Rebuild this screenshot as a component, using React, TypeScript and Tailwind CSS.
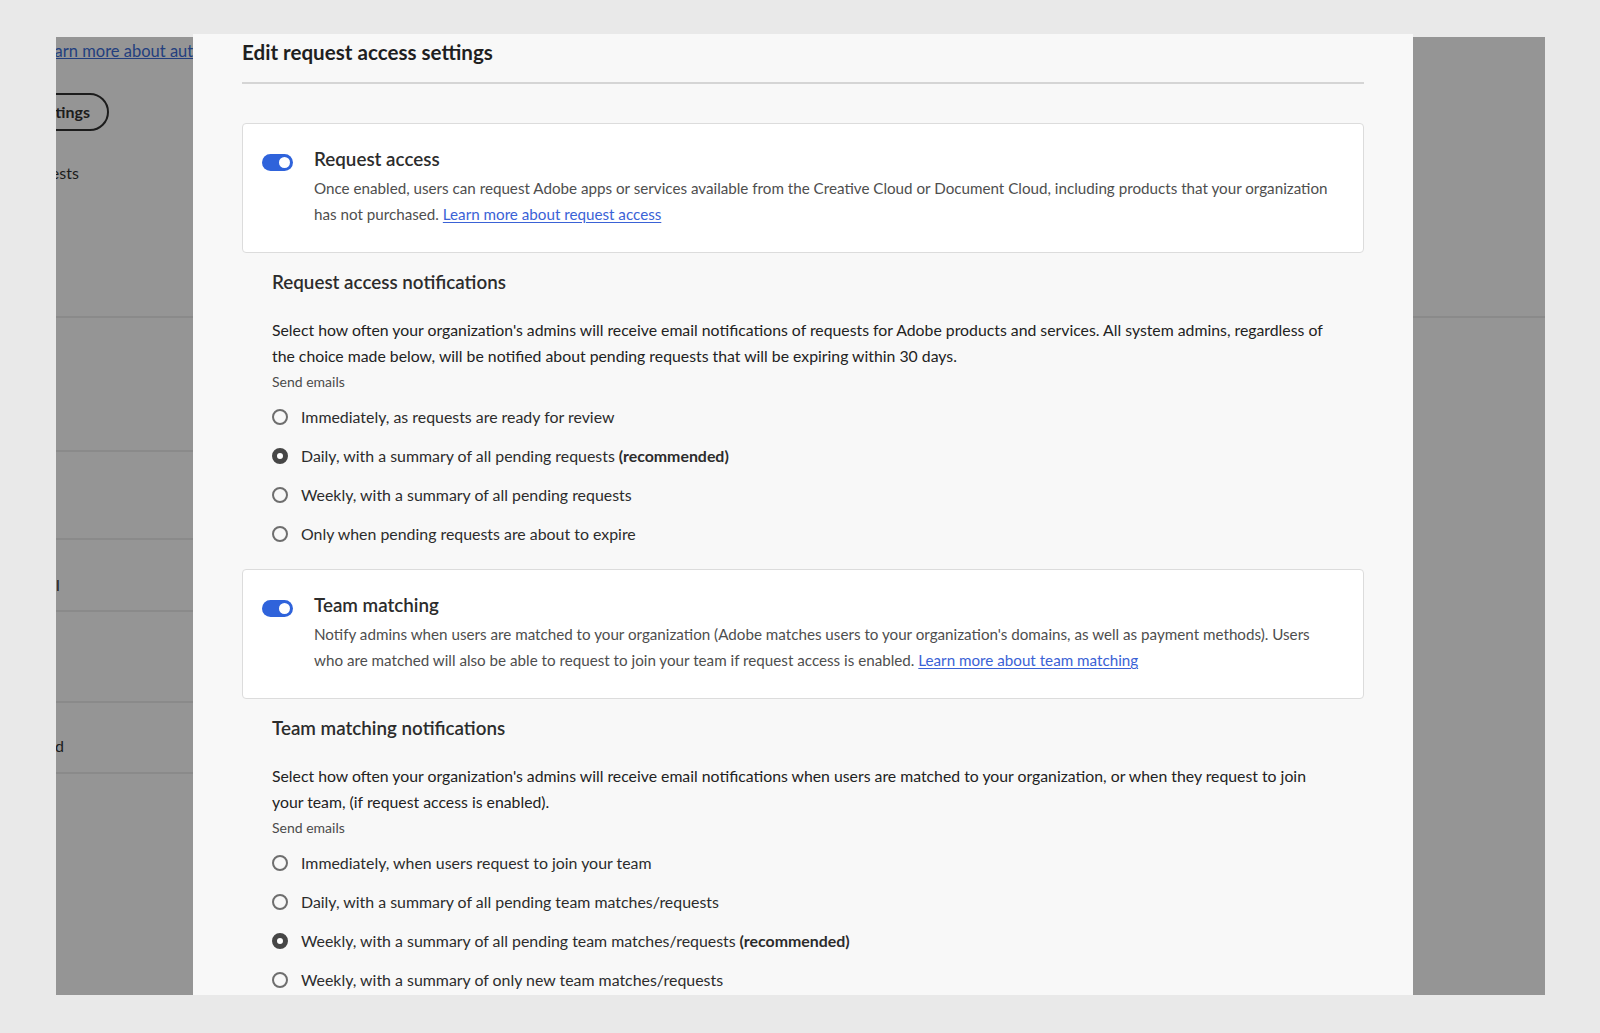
import React from 'react'

type Option = { label: string; extra?: string; checked?: boolean }

const requestOptions: Option[] = [
  { label: 'Immediately, as requests are ready for review' },
  { label: 'Daily, with a summary of all pending requests', extra: '(recommended)', checked: true },
  { label: 'Weekly, with a summary of all pending requests' },
  { label: 'Only when pending requests are about to expire' },
]

const teamOptions: Option[] = [
  { label: 'Immediately, when users request to join your team' },
  { label: 'Daily, with a summary of all pending team matches/requests' },
  { label: 'Weekly, with a summary of all pending team matches/requests', extra: '(recommended)', checked: true },
  { label: 'Weekly, with a summary of only new team matches/requests' },
]

function Toggle() {
  return (
    <div className="mt-[7px] w-[31px] h-[17px] shrink-0 rounded-full bg-[#2f63db] flex items-center justify-end pr-[3px]">
      <div className="w-[11px] h-[11px] rounded-full bg-white" />
    </div>
  )
}

function Radio({ checked }: { checked?: boolean }) {
  return checked ? (
    <span className="w-4 h-4 rounded-full border-[5px] border-[#464646] bg-white shrink-0" />
  ) : (
    <span className="w-4 h-4 rounded-full border-2 border-[#6e6e6e] bg-transparent shrink-0" />
  )
}

function SettingCard({ title, lines, link }: { title: string; lines: string[]; link: string }) {
  return (
    <div className="bg-white border border-[#dcdcdc] rounded-[4px] pt-[23px] pb-[25px] px-[19px] flex gap-[21px]">
      <Toggle />
      <div>
        <div className="text-[18.8px] leading-[24px] font-semibold text-[#2c2c2c]">{title}</div>
        <p className="mt-[4px] text-[15.2px] leading-[26px] text-[#4e4e4e] whitespace-nowrap">
          {lines[0]}
          <br />
          {lines[1]}{' '}
          <a className="text-[#3a62d6] underline underline-offset-2">{link}</a>
        </p>
      </div>
    </div>
  )
}

function NotificationSection({ heading, lines, options }: { heading: string; lines: string[]; options: Option[] }) {
  return (
    <section className="pl-[30px] mt-[17px]">
      <h3 className="text-[18.8px] leading-[24px] font-semibold text-[#2c2c2c]">{heading}</h3>
      <p className="mt-[23px] text-[15.8px] leading-[26px] text-[#222222] whitespace-nowrap">
        {lines[0]}
        <br />
        {lines[1]}
      </p>
      <div className="mt-[3px] text-[14px] leading-[20px] text-[#4b4b4b]">Send emails</div>
      <div className="mt-[13px] flex flex-col gap-[15px]">
        {options.map(o => (
          <label key={o.label} className="h-[24px] flex items-center gap-[13px] text-[15.9px] text-[#2c2c2c]">
            <Radio checked={o.checked} />
            <span>
              {o.label}
              {o.extra && <b className="font-bold"> {o.extra}</b>}
            </span>
          </label>
        ))}
      </div>
    </section>
  )
}

export default function App() {
  return (
    <div className="h-[1033px] bg-[#e9e9e9] pt-[34px] pl-[56px] overflow-hidden font-['Lato',sans-serif]">
      <div className="flex items-start">
        {/* Background page, dimmed by the modal overlay */}
        <div className="mt-[3px] w-[137px] h-[958px] bg-[#959595] overflow-hidden text-[#1c1c1c]">
          <div className="h-[281px] border-b-2 border-[#8a8a8a]">
            <div className="pt-[3px] -ml-[18px] whitespace-nowrap text-[16.5px] leading-[22px] text-[#233f7e] underline">
              Learn more about automatic
            </div>
            <div className="mt-[31px] -ml-[60px] w-[113px] h-[38px] rounded-full border-2 border-[#1c1c1c] flex items-center justify-end pr-[17px] text-[16px] font-bold whitespace-nowrap">
              Settings
            </div>
            <div className="mt-[31px] -ml-[41px] text-[16px] leading-[22px] whitespace-nowrap">Requests</div>
          </div>
          <div className="h-[134px] border-b-2 border-[#8a8a8a]" />
          <div className="h-[88px] border-b-2 border-[#8a8a8a]" />
          <div className="h-[72px] border-b-2 border-[#8a8a8a] pt-[34px] text-[16px] leading-[22px]">l</div>
          <div className="h-[91px] border-b-2 border-[#8a8a8a]" />
          <div className="h-[71px] border-b-2 border-[#8a8a8a] pt-[32px] -ml-[1px] text-[16px] leading-[22px]">d</div>
        </div>

        {/* Modal */}
        <div className="w-[1220px] h-[961px] bg-[#f8f8f8] overflow-hidden px-[49px] pt-[4px]">
          <h2 className="text-[20.6px] leading-[28px] font-bold text-[#1f1f1f]">Edit request access settings</h2>
          <div className="mt-[16px] h-[2px] bg-[#d5d5d5]" />

          <div className="mt-[39px]">
            <SettingCard
              title="Request access"
              lines={[
                'Once enabled, users can request Adobe apps or services available from the Creative Cloud or Document Cloud, including products that your organization',
                'has not purchased.',
              ]}
              link="Learn more about request access"
            />
          </div>

          <NotificationSection
            heading="Request access notifications"
            lines={[
              "Select how often your organization's admins will receive email notifications of requests for Adobe products and services. All system admins, regardless of",
              'the choice made below, will be notified about pending requests that will be expiring within 30 days.',
            ]}
            options={requestOptions}
          />

          <div className="mt-[23px]">
            <SettingCard
              title="Team matching"
              lines={[
                "Notify admins when users are matched to your organization (Adobe matches users to your organization's domains, as well as payment methods). Users",
                'who are matched will also be able to request to join your team if request access is enabled.',
              ]}
              link="Learn more about team matching"
            />
          </div>

          <NotificationSection
            heading="Team matching notifications"
            lines={[
              "Select how often your organization's admins will receive email notifications when users are matched to your organization, or when they request to join",
              'your team, (if request access is enabled).',
            ]}
            options={teamOptions}
          />
        </div>

        <div className="mt-[3px] w-[132px] h-[958px] bg-[#959595]">
          <div className="h-[281px] border-b-2 border-[#8a8a8a]" />
        </div>
      </div>
    </div>
  )
}
